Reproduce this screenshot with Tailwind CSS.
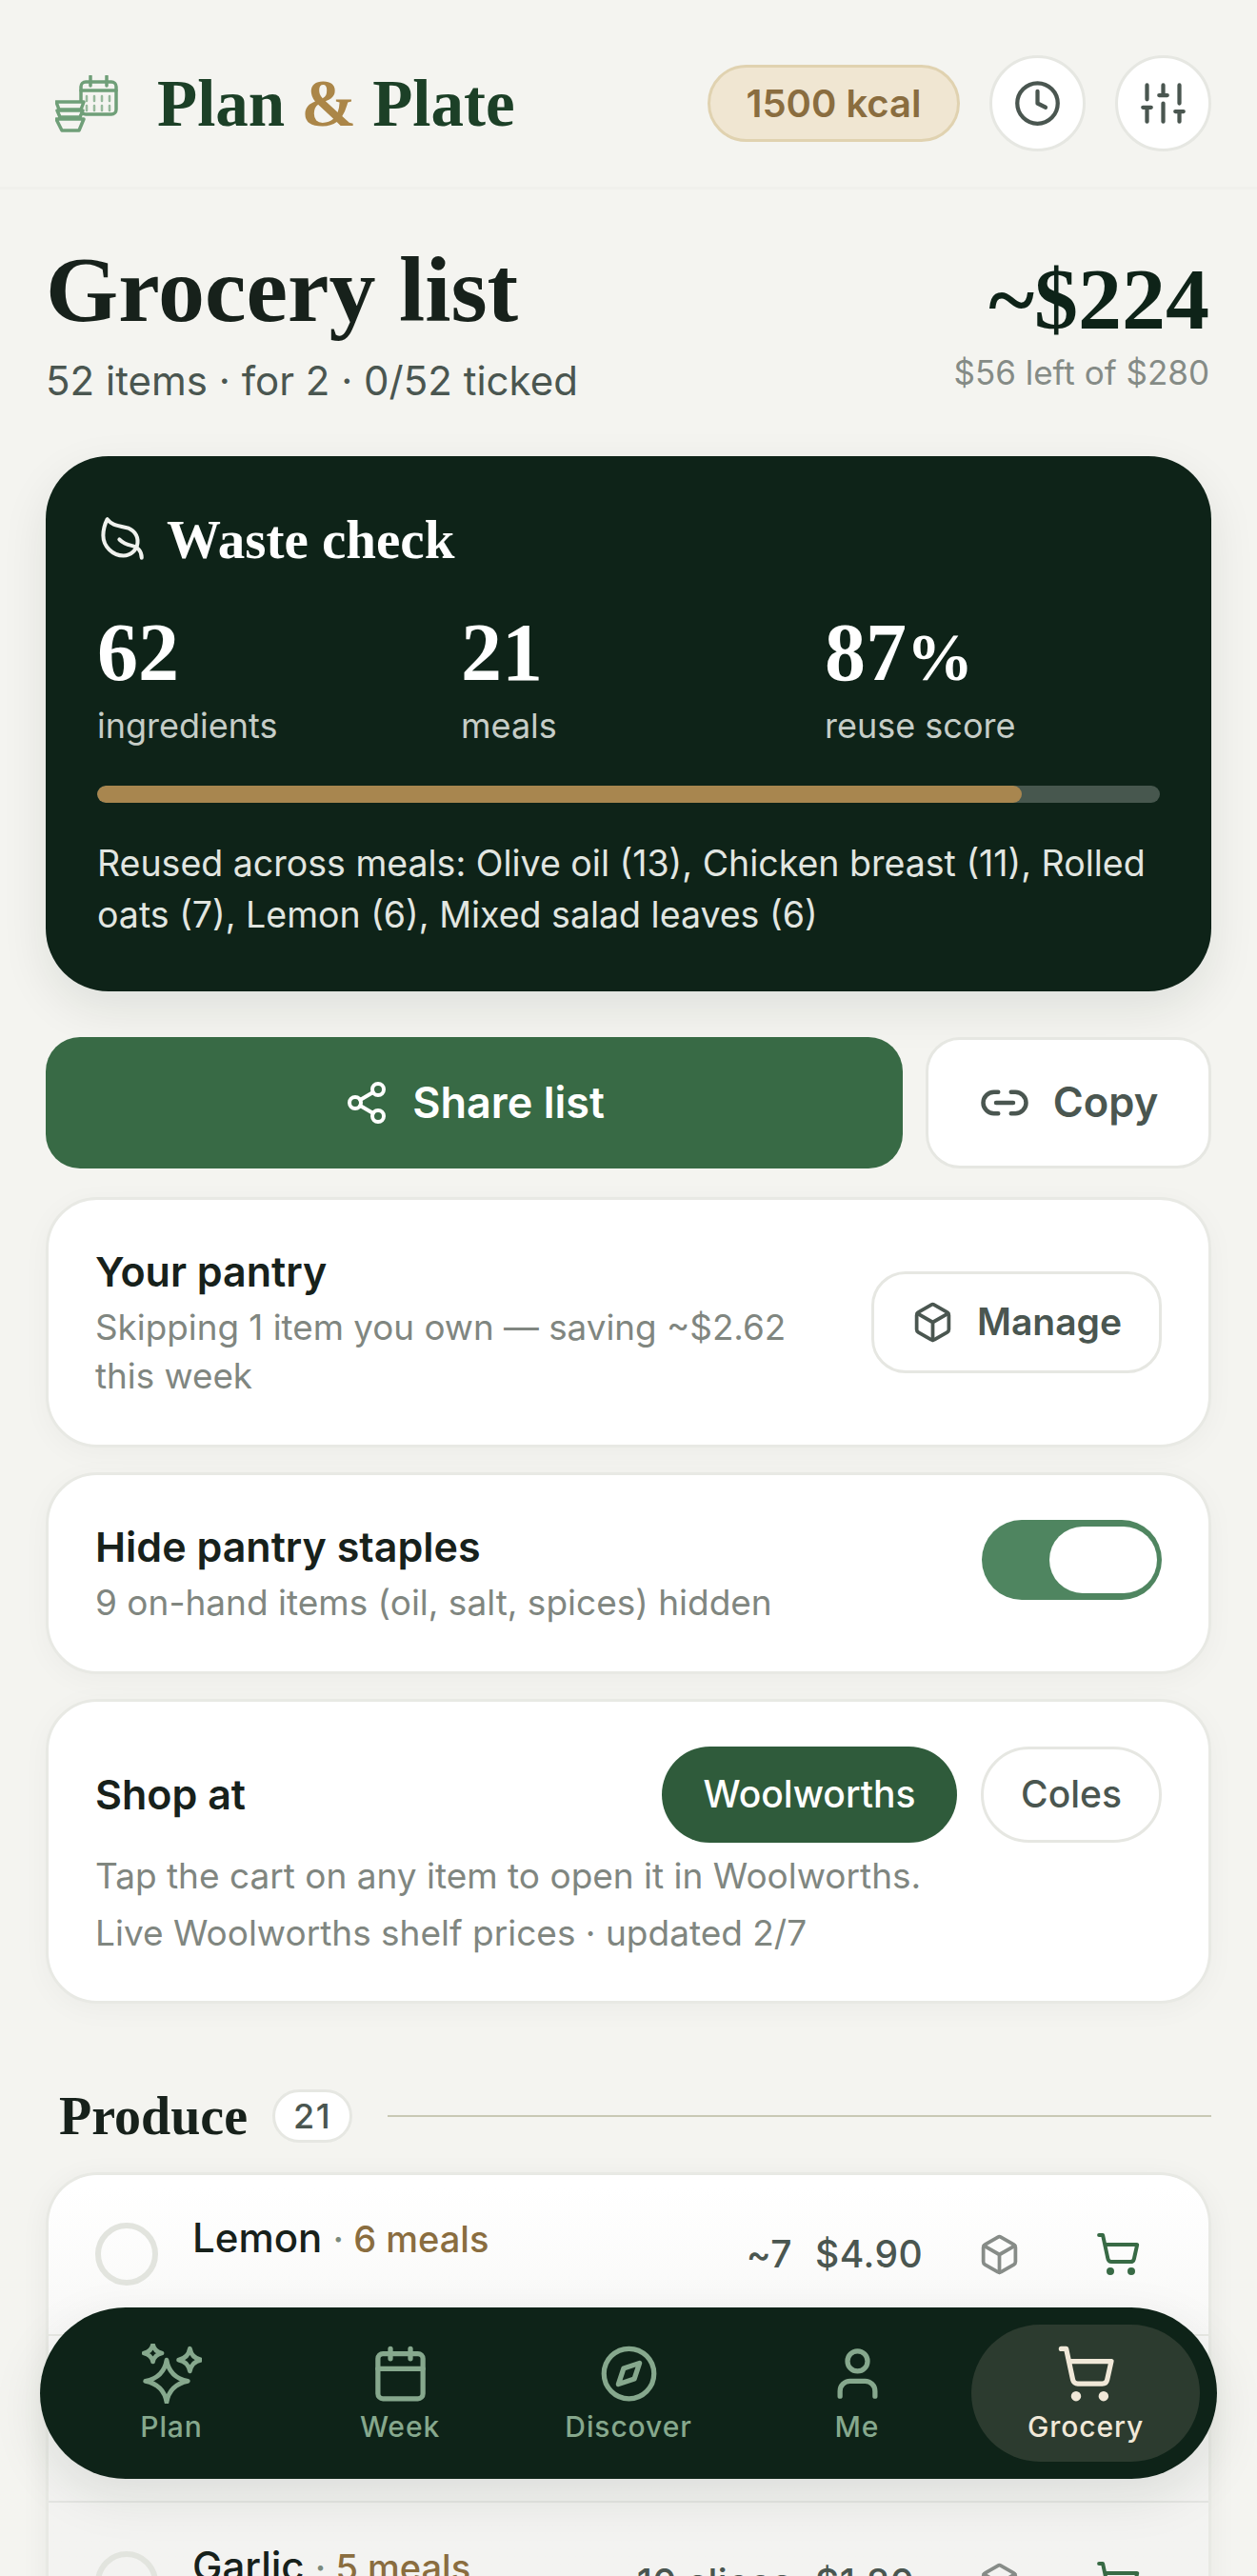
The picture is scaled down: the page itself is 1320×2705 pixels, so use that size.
<!DOCTYPE html>
<html lang="en">
<head>
<meta charset="utf-8">
<title>Grocery list</title>
<script src="https://cdn.jsdelivr.net/npm/@tailwindcss/browser@4"></script>
</head>
<body class="bg-[#f4f4f0] font-['Inter',sans-serif] text-[#17211b]">
<div class="relative w-[1320px] h-[2705px] overflow-hidden">
  <header class="h-[199px] pt-[21px] px-[48px] flex items-center justify-between border-b-[3px] border-[#f0f0ec]">
    <div class="flex items-center">
      <svg class="ml-[10px] w-[66px] h-[60px]" viewBox="0 0 66 60" fill="none" stroke="#6f9f78" stroke-width="3.5" stroke-linecap="round" stroke-linejoin="round">
        <rect x="27" y="7" width="37" height="34" rx="5"/>
        <path d="M27 16h37M37 1v10M54 1v10"/>
        <path d="M33 22v5M41 22v5M49 22v5M57 22v5M33 32v5M41 32v5M49 32v5M57 32v5" stroke-width="2.5" stroke-opacity=".7"/>
        <path d="M1 28h29l-3 8H4zM2 37h27l-3 7H5zM1 46h29l-5 12H7z" fill="#f4f4f0"/>
      </svg>
      <h1 class="ml-[41px] pt-[2px] font-['Liberation_Serif',serif] font-bold text-[69px] leading-none text-[#1c4027]">Plan <span class="text-[#ab8648]">&amp;</span> Plate</h1>
    </div>
    <div class="flex items-center gap-[31px]">
      <div class="h-[81px] w-[265px] rounded-full bg-[#f0e6d2] border-[3px] border-[#e0d2b0] flex items-center justify-center text-[40px] font-semibold text-[#8a6d3f]">1500 kcal</div>
      <button class="w-[101px] h-[101px] rounded-full bg-white border-[3px] border-[#e6e7e2] flex items-center justify-center">
        <svg class="w-[51px] h-[51px]" viewBox="0 0 24 24" fill="none" stroke="#4a5650" stroke-width="2" stroke-linecap="round" stroke-linejoin="round"><circle cx="12" cy="12" r="10"/><path d="M12 6v6l4 2"/></svg>
      </button>
      <button class="w-[101px] h-[101px] rounded-full bg-white border-[3px] border-[#e6e7e2] flex items-center justify-center">
        <svg class="w-[51px] h-[51px]" viewBox="0 0 24 24" fill="none" stroke="#4a5650" stroke-width="2" stroke-linecap="round" stroke-linejoin="round"><path d="M4 21v-7M4 10V3M12 21v-9M12 8V3M20 21v-5M20 12V3M2 14h4M10 8h4M18 16h4"/></svg>
      </button>
    </div>
  </header>

  <main class="px-[48px]">
    <section class="h-[280px] pt-[60px] flex justify-between">
      <div>
        <h2 class="font-['Liberation_Serif',serif] font-bold text-[98px] leading-[90px] text-[#17211b]">Grocery list</h2>
        <p class="mt-[24px] text-[42px] leading-[54px] text-[#4a5650]">52 items · for 2 · 0/52 ticked</p>
      </div>
      <div class="text-right pt-[10px] pr-[2px]">
        <div class="font-['Liberation_Serif',serif] font-bold text-[92px] leading-[90px] text-[#0e2318]">~$224</div>
        <div class="mt-[8px] text-[35px] leading-[48px] text-[#858b86]">$56 left of $280</div>
      </div>
    </section>

    <section class="h-[562px] rounded-[66px] bg-[#0e2318] px-[54px] pt-[60px] shadow-[0_18px_50px_rgba(15,36,23,0.09)] text-white">
      <div class="flex items-center gap-[22px] h-[54px]">
        <svg class="w-[51px] h-[51px] -scale-x-100" viewBox="0 0 24 24" fill="none" stroke="#f0f2ee" stroke-width="1.9" stroke-linecap="round" stroke-linejoin="round"><path d="M11 20A7 7 0 0 1 9.8 6.1C15.5 5 17 4.48 19 2c1 2 2 4.18 2 8 0 5.5-4.78 10-10 10Z"/><path d="M2 21c0-3 1.85-5.36 5.08-6C9.5 14.52 12 13 13 12"/></svg>
        <h3 class="font-['Liberation_Serif',serif] font-bold text-[57px] leading-none">Waste check</h3>
      </div>
      <div class="mt-[50px] grid grid-cols-3 gap-[30px]">
        <div><div class="h-[84px] font-['Liberation_Serif',serif] font-bold text-[86px] leading-[84px]">62</div><div class="mt-[11px] text-[36px] leading-[48px] text-[#c6cdc7]">ingredients</div></div>
        <div><div class="h-[84px] font-['Liberation_Serif',serif] font-bold text-[86px] leading-[84px]">21</div><div class="mt-[11px] text-[36px] leading-[48px] text-[#c6cdc7]">meals</div></div>
        <div><div class="h-[84px] font-['Liberation_Serif',serif] font-bold text-[86px] leading-[84px]">87<span class="text-[70px]">%</span></div><div class="mt-[11px] text-[36px] leading-[48px] text-[#c6cdc7]">reuse score</div></div>
      </div>
      <div class="mt-[39px] h-[18px] rounded-[9px] bg-[#47574e] overflow-hidden"><div class="h-full w-[87%] rounded-[9px] bg-[#a8864f]"></div></div>
      <p class="mt-[37px] text-[37.5px] leading-[54px] text-[#e2e6e1]">Reused across meals: Olive oil (13), Chicken breast (11), Rolled oats (7), Lemon (6), Mixed salad leaves (6)</p>
    </section>

    <section class="mt-[48px] flex gap-[24px] h-[138px]">
      <button class="w-[900px] rounded-[36px] bg-[#386a45] text-white flex items-center justify-center gap-[24px] text-[45px] font-semibold">
        <svg class="w-[48px] h-[48px]" viewBox="0 0 24 24" fill="none" stroke="currentColor" stroke-width="2" stroke-linecap="round" stroke-linejoin="round"><circle cx="18" cy="5" r="3"/><circle cx="6" cy="12" r="3"/><circle cx="18" cy="19" r="3"/><path d="m8.59 13.51 6.83 3.98M15.41 6.51l-6.82 3.98"/></svg>
        Share list
      </button>
      <button class="flex-1 rounded-[36px] bg-white border-[3px] border-[#e6e7e2] text-[#4a5650] flex items-center justify-center gap-[24px] text-[43.5px] font-semibold">
        <svg class="w-[54px] h-[54px]" viewBox="0 0 24 24" fill="none" stroke="currentColor" stroke-width="2" stroke-linecap="round" stroke-linejoin="round"><path d="M9 17H7A5 5 0 0 1 7 7h2M15 7h2a5 5 0 1 1 0 10h-2M8 12h8"/></svg>
        Copy
      </button>
    </section>

    <section class="mt-[30px] flex flex-col gap-[26px]">
      <div class="h-[263px] rounded-[54px] bg-white border-[3px] border-[#e8e9e4] shadow-[0_6px_30px_rgba(15,36,23,0.035)] px-[49px] flex items-center justify-between">
        <div class="w-[780px]">
          <div class="text-[43px] leading-[54px] font-semibold text-[#17211b]">Your pantry</div>
          <p class="mt-[6px] text-[36.8px] leading-[51px] text-[#808680]">Skipping 1 item you own — saving ~$2.62 this week</p>
        </div>
        <button class="w-[305px] h-[107px] rounded-[36px] border-[3px] border-[#e6e7e2] text-[#4a5650] flex items-center justify-center gap-[24px] text-[39px] font-semibold">
          <svg class="w-[45px] h-[45px]" viewBox="0 0 24 24" fill="none" stroke="currentColor" stroke-width="2" stroke-linecap="round" stroke-linejoin="round"><path d="M21 8a2 2 0 0 0-1-1.73l-7-4a2 2 0 0 0-2 0l-7 4A2 2 0 0 0 3 8v8a2 2 0 0 0 1 1.73l7 4a2 2 0 0 0 2 0l7-4A2 2 0 0 0 21 16Z"/><path d="m3.3 7 8.7 5 8.7-5M12 22V12"/></svg>
          Manage
        </button>
      </div>

      <div class="h-[212px] rounded-[54px] bg-white border-[3px] border-[#e8e9e4] shadow-[0_6px_30px_rgba(15,36,23,0.035)] px-[49px] flex items-center justify-between">
        <div>
          <div class="text-[43px] leading-[54px] font-semibold text-[#17211b]">Hide pantry staples</div>
          <p class="mt-[6px] text-[37px] leading-[51px] text-[#808680]">9 on-hand items (oil, salt, spices) hidden</p>
        </div>
        <div class="relative self-start mt-[47px] w-[189px] h-[84px] rounded-full bg-[#4f8560]">
          <div class="absolute right-[5px] top-[7px] w-[113px] h-[70px] rounded-full bg-white"></div>
        </div>
      </div>

      <div class="h-[320px] rounded-[54px] bg-white border-[3px] border-[#e8e9e4] shadow-[0_6px_30px_rgba(15,36,23,0.035)] px-[49px] pt-[47px]">
        <div class="flex items-center justify-between h-[101px]">
          <div class="text-[43px] font-semibold text-[#17211b]">Shop at</div>
          <div class="flex gap-[25px]">
            <button class="w-[310px] h-[101px] rounded-full bg-[#2f5b3b] text-white text-[39px] font-medium">Woolworths</button>
            <button class="w-[190px] h-[101px] rounded-full border-[3px] border-[#e6e7e2] text-[#4a5650] text-[39px] font-medium">Coles</button>
          </div>
        </div>
        <p class="mt-[5px] text-[37px] leading-[60px] text-[#808680]">Tap the cart on any item to open it in Woolworths.<br>Live Woolworths shelf prices · updated 2/7</p>
      </div>
    </section>

    <section class="mt-[90px] flex items-center h-[56px] pl-[14px]">
      <h3 class="font-['Liberation_Serif',serif] font-bold text-[56px] leading-none text-[#17211b]">Produce</h3>
      <span class="ml-[26px] w-[84px] h-[56px] rounded-full bg-white border-[3px] border-[#e6e7e2] flex items-center justify-center text-[36px] font-medium tracking-[1.5px] text-[#4a5650]">21</span>
      <div class="ml-[37px] flex-1 h-[2px] bg-[#c8c8b4]"></div>
    </section>

    <section class="mt-[31px] rounded-t-[54px] border-x-[3px] border-t-[3px] border-[#e8e9e4] bg-gradient-to-b from-white from-[3%] to-[#f3f3f1] to-[60%] shadow-[0_6px_30px_rgba(15,36,23,0.05)]">
      <div class="h-[169px] border-b-2 border-[#e8e9e4] flex items-start pt-[50px] pl-[49px] pr-[71px]">
        <div class="w-[66px] h-[66px] rounded-full border-[6px] border-[#e2e4de] shrink-0"></div>
        <div class="-mt-[11px] ml-[36px] flex-1 text-[42px] leading-[54px] font-medium text-[#17211b]">Lemon <span class="text-[38px] text-[#8a6d3f]"><span class="text-[#7b8a7d]">·</span> 6 meals</span></div>
        <div class="flex items-center h-[66px] text-[39px] font-medium tracking-[0.5px] text-[#4a5650]">
          <span>~7</span><span class="ml-[24px] w-[108px]">$4.90</span>
          <svg class="ml-[63px] w-[45px] h-[45px]" viewBox="0 0 24 24" fill="none" stroke="#878c88" stroke-width="2" stroke-linecap="round" stroke-linejoin="round"><path d="M21 8a2 2 0 0 0-1-1.73l-7-4a2 2 0 0 0-2 0l-7 4A2 2 0 0 0 3 8v8a2 2 0 0 0 1 1.73l7 4a2 2 0 0 0 2 0l7-4A2 2 0 0 0 21 16Z"/><path d="m3.3 7 8.7 5 8.7-5M12 22V12"/></svg>
          <svg class="ml-[78px] w-[48px] h-[48px]" viewBox="0 0 24 24" fill="none" stroke="#386a45" stroke-width="2" stroke-linecap="round" stroke-linejoin="round"><circle cx="8" cy="21" r="1"/><circle cx="19" cy="21" r="1"/><path d="M2.05 2.05h2l2.66 12.42a2 2 0 0 0 2 1.58h9.78a2 2 0 0 0 1.95-1.57l1.65-7.43H5.12"/></svg>
        </div>
      </div>
      <div class="h-[175px] border-b-2 border-[#e4e5e2]"></div>
      <div class="h-[120px] flex items-start pt-[51px] pl-[49px] pr-[71px]">
        <div class="w-[66px] h-[66px] rounded-full border-[6px] border-[#e2e4de] shrink-0"></div>
        <div class="-mt-[11px] ml-[36px] flex-1 text-[42px] leading-[54px] font-medium text-[#17211b]">Garlic <span class="text-[38px] text-[#8a6d3f]"><span class="text-[#7b8a7d]">·</span> 5 meals</span></div>
        <div class="flex items-center h-[66px] text-[39px] font-medium tracking-[0.5px] text-[#4a5650]">
          <span>10 slices</span><span class="ml-[24px] w-[108px]">$1.80</span>
          <svg class="ml-[63px] w-[45px] h-[45px]" viewBox="0 0 24 24" fill="none" stroke="#878c88" stroke-width="2" stroke-linecap="round" stroke-linejoin="round"><path d="M21 8a2 2 0 0 0-1-1.73l-7-4a2 2 0 0 0-2 0l-7 4A2 2 0 0 0 3 8v8a2 2 0 0 0 1 1.73l7 4a2 2 0 0 0 2 0l7-4A2 2 0 0 0 21 16Z"/><path d="m3.3 7 8.7 5 8.7-5M12 22V12"/></svg>
          <svg class="ml-[78px] w-[48px] h-[48px]" viewBox="0 0 24 24" fill="none" stroke="#386a45" stroke-width="2" stroke-linecap="round" stroke-linejoin="round"><circle cx="8" cy="21" r="1"/><circle cx="19" cy="21" r="1"/><path d="M2.05 2.05h2l2.66 12.42a2 2 0 0 0 2 1.58h9.78a2 2 0 0 0 1.95-1.57l1.65-7.43H5.12"/></svg>
        </div>
      </div>
    </section>
  </main>

  <nav class="absolute left-[42px] top-[2423px] w-[1236px] h-[180px] rounded-full bg-[#0e2318] shadow-[0_18px_54px_rgba(15,36,23,0.1)] px-[18px] flex items-center">
    <a class="w-[240px] h-[144px] flex flex-col items-center text-[#86a88d]">
      <svg class="mt-[20px] w-[63px] h-[63px]" viewBox="0 0 24 24" fill="none" stroke="currentColor" stroke-width="1.8" stroke-linejoin="round"><path d="M9.9 6.5Q11 13.5 18.4 15 11 16.5 9.9 23.5 8.8 16.5 1.4 15 8.8 13.5 9.9 6.5Z"/><path d="M4.4.4Q5 3.2 8 3.8 5 4.4 4.4 7.2 3.8 4.4.8 3.8 3.8 3.2 4.4.4Z"/><path d="M19.2 2Q19.9 5.8 23.7 6.5 19.9 7.2 19.2 11 18.5 7.2 14.7 6.5 18.5 5.8 19.2 2Z"/></svg>
      <span class="mt-[4px] text-[30px] leading-[40px] font-medium tracking-[0.9px]">Plan</span>
    </a>
    <a class="w-[240px] h-[144px] flex flex-col items-center text-[#86a88d]">
      <svg class="mt-[20px] w-[63px] h-[63px]" viewBox="0 0 24 24" fill="none" stroke="currentColor" stroke-width="2" stroke-linecap="round" stroke-linejoin="round"><path d="M8 2v4M16 2v4"/><rect x="3" y="4" width="18" height="18" rx="2"/><path d="M3 10h18"/></svg>
      <span class="mt-[4px] text-[30px] leading-[40px] font-medium tracking-[0.9px]">Week</span>
    </a>
    <a class="w-[240px] h-[144px] flex flex-col items-center text-[#86a88d]">
      <svg class="mt-[20px] w-[63px] h-[63px]" viewBox="0 0 24 24" fill="none" stroke="currentColor" stroke-width="2" stroke-linecap="round" stroke-linejoin="round"><circle cx="12" cy="12" r="10"/><path d="m16.24 7.76-2.12 6.36-6.36 2.12 2.12-6.36 6.36-2.12z"/></svg>
      <span class="mt-[4px] text-[30px] leading-[40px] font-medium tracking-[0.9px]">Discover</span>
    </a>
    <a class="w-[240px] h-[144px] flex flex-col items-center text-[#86a88d]">
      <svg class="mt-[20px] w-[63px] h-[63px]" viewBox="0 0 24 24" fill="none" stroke="currentColor" stroke-width="2" stroke-linecap="round" stroke-linejoin="round"><path d="M19 21v-2a4 4 0 0 0-4-4H9a4 4 0 0 0-4 4v2"/><circle cx="12" cy="7" r="4"/></svg>
      <span class="mt-[4px] text-[30px] leading-[40px] font-medium tracking-[0.9px]">Me</span>
    </a>
    <a class="w-[240px] h-[144px] rounded-[72px] bg-[#2c3b2f] flex flex-col items-center text-[#f0e8d8]">
      <svg class="mt-[20px] w-[63px] h-[63px]" viewBox="0 0 24 24" fill="none" stroke="currentColor" stroke-width="2" stroke-linecap="round" stroke-linejoin="round"><circle cx="8" cy="21" r="1"/><circle cx="19" cy="21" r="1"/><path d="M2.05 2.05h2l2.66 12.42a2 2 0 0 0 2 1.58h9.78a2 2 0 0 0 1.95-1.57l1.65-7.43H5.12"/></svg>
      <span class="mt-[4px] text-[30px] leading-[40px] font-medium tracking-[0.9px]">Grocery</span>
    </a>
  </nav>
</div>
</body>
</html>
